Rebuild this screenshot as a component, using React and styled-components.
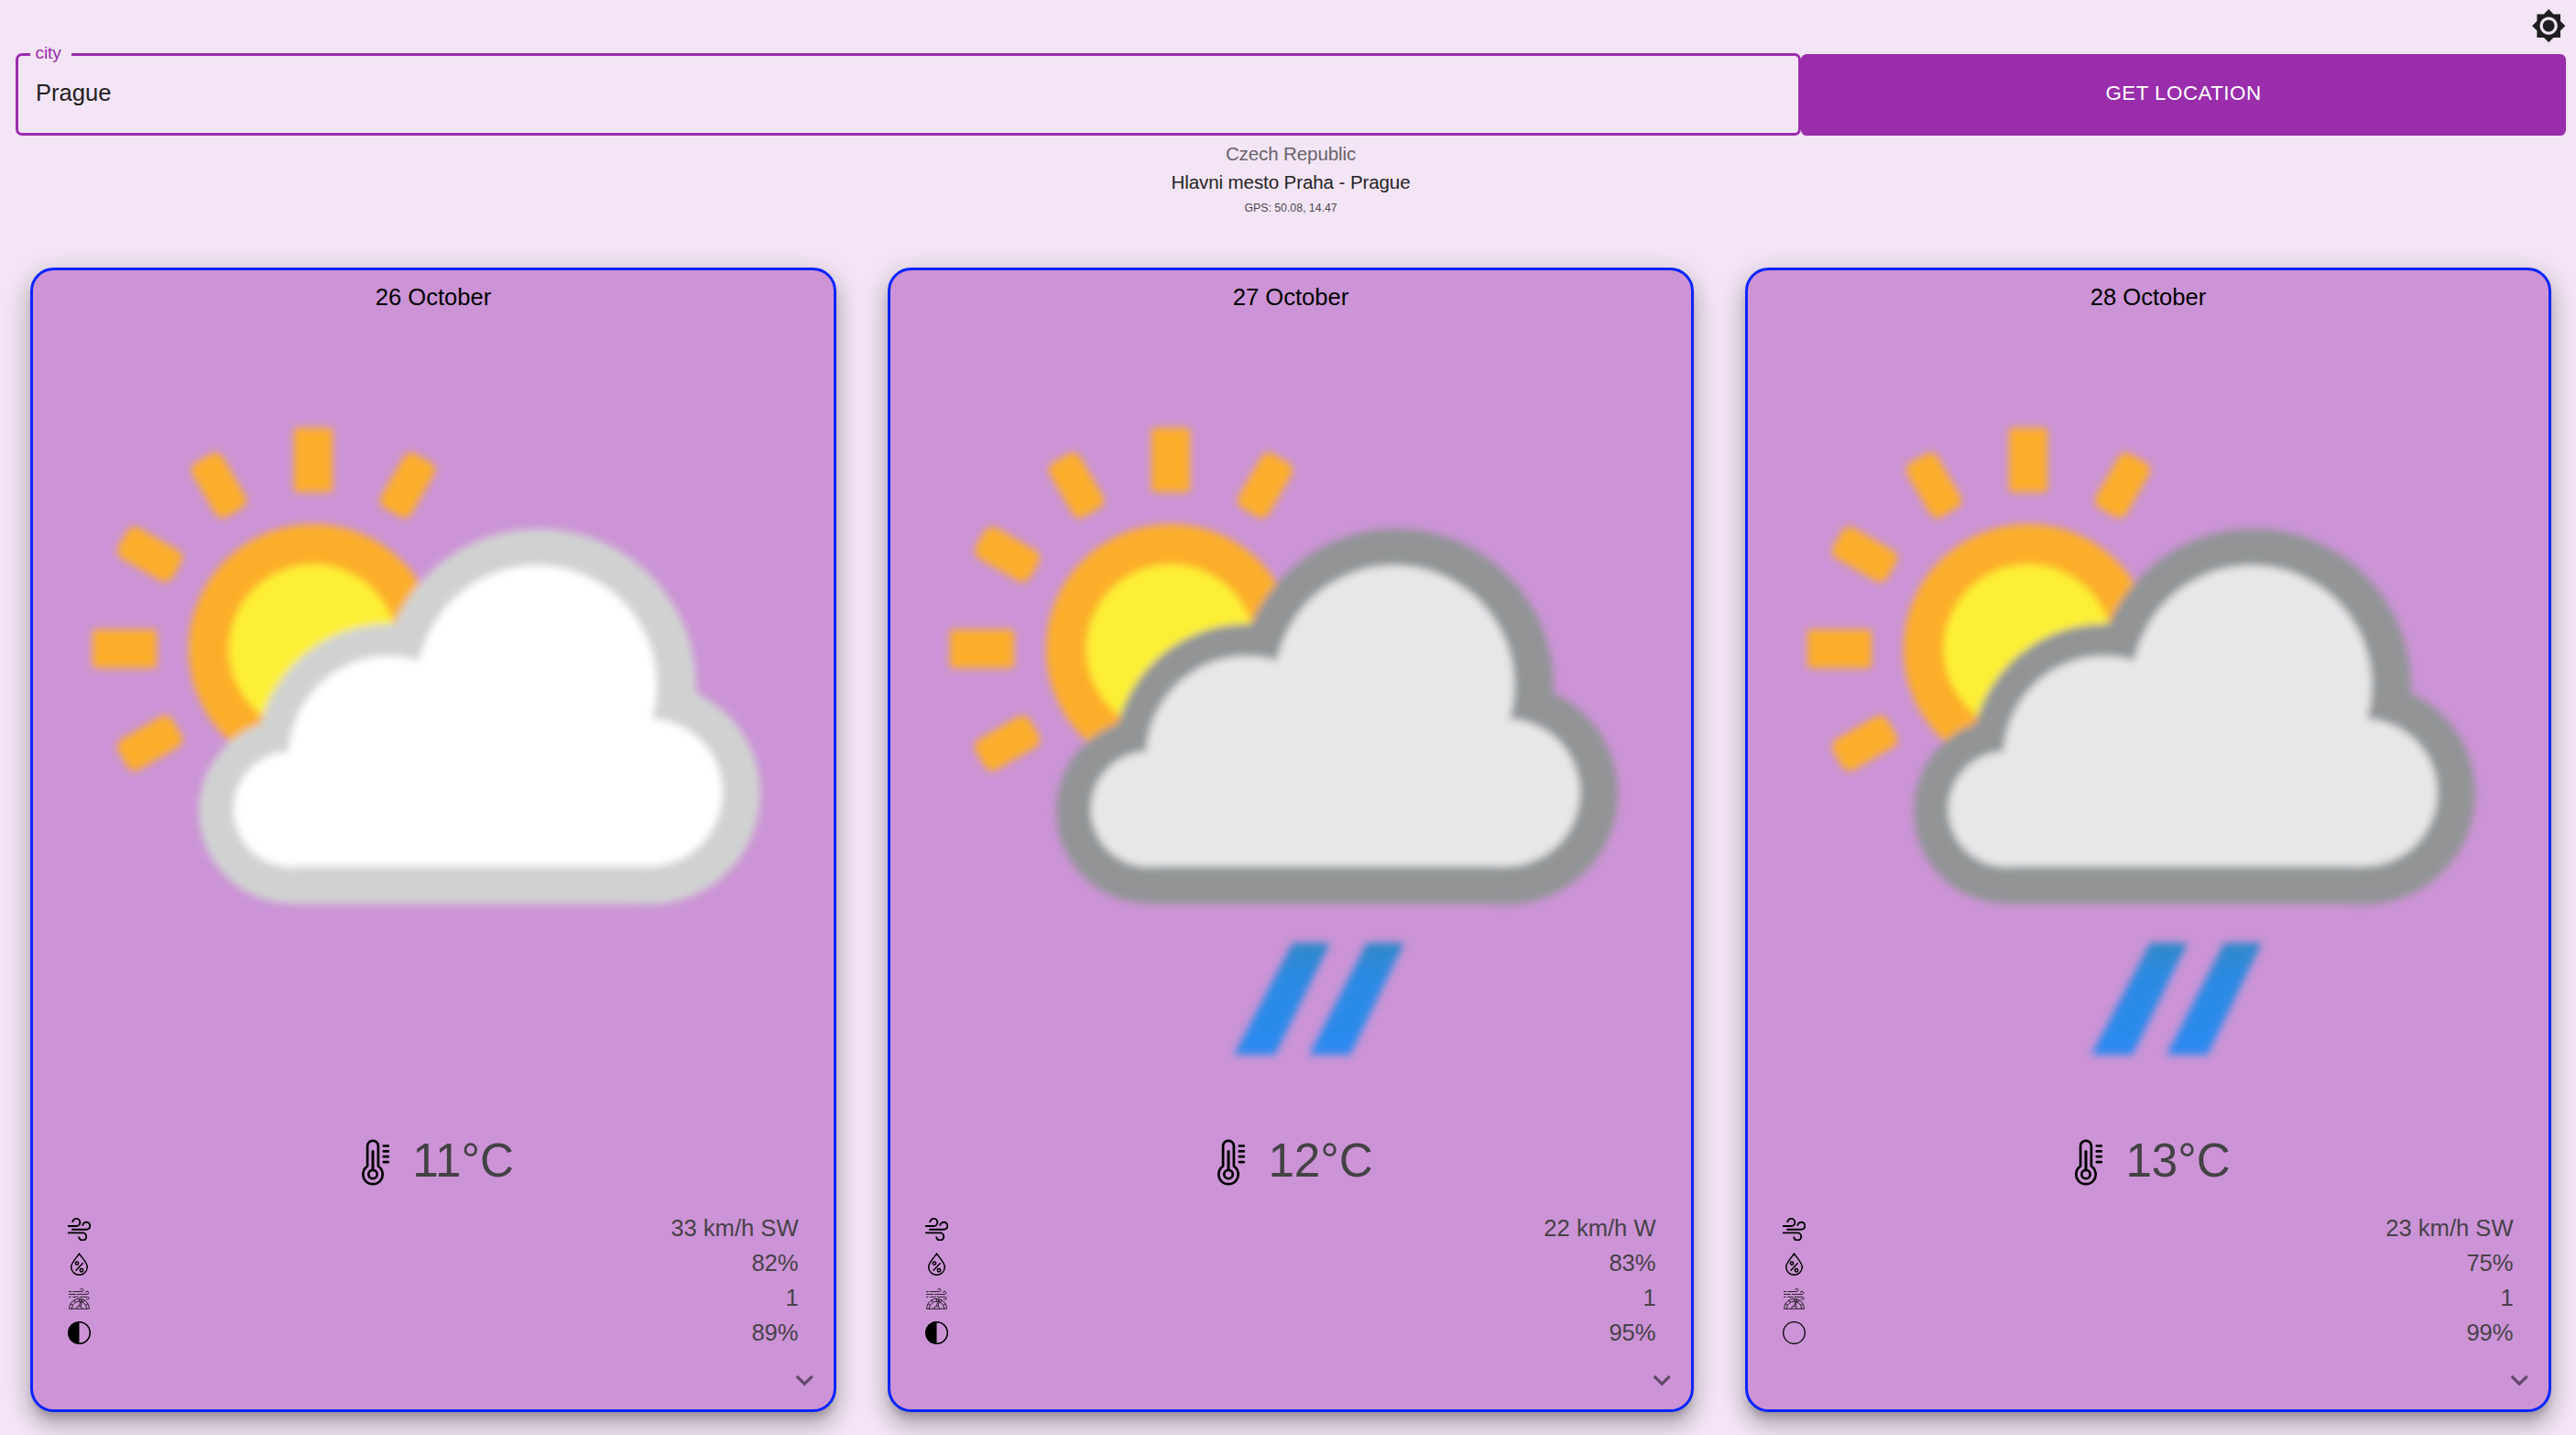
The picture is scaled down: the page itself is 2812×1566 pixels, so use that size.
import React from "react";
import styled, { createGlobalStyle } from "styled-components";

const GlobalStyle = createGlobalStyle`
  *, *::before, *::after { box-sizing: border-box; }
  html, body { margin: 0; padding: 0; }
  body {
    background: #f3e5f5;
    font-family: "Liberation Sans", Arial, Helvetica, sans-serif;
    color: rgba(0, 0, 0, 0.87);
    overflow: hidden;
  }
`;

const Page = styled.main`
  min-height: 1566px;
  padding: 0 11px 25px 17px;
`;

const TopBar = styled.header`
  display: flex;
  justify-content: flex-end;
  height: 58px;
  padding-top: 9px;
`;

const ThemeButton = styled.button`
  display: block;
  width: 38.4px;
  height: 38.4px;
  padding: 0;
  border: 0;
  background: none;
  color: #1f1e20;
  svg { display: block; width: 100%; height: 100%; }
`;

const SearchRow = styled.div`
  display: flex;
  height: 90px;
`;

const Field = styled.div`
  position: relative;
  display: flex;
  width: 1949px;
  border: 3px solid #9a2dac;
  border-radius: 7px;
`;

const FieldLabel = styled.label`
  position: absolute;
  top: -14px;
  left: 13px;
  width: 45px;
  padding-left: 5.5px;
  background: #f3e5f5;
  color: #9a2dac;
  font-size: 19.2px;
  line-height: 22px;
  letter-spacing: -0.15px;
`;

const FieldInput = styled.input`
  flex: 1;
  min-width: 0;
  padding: 0 19px 3px;
  border: 0;
  outline: 0;
  background: none;
  color: #212022;
  font: 25.6px "Liberation Sans", Arial, sans-serif;
`;

const LocationButton = styled.button`
  width: 835px;
  height: 89px;
  margin-top: 1px;
  padding: 0 0 3px;
  border: 0;
  border-radius: 6.4px;
  background: #9a2dac;
  color: #fff;
  font: 22.4px "Liberation Sans", Arial, sans-serif;
  letter-spacing: 0.45px;
  text-transform: uppercase;
`;

const Place = styled.section`
  display: flex;
  flex-direction: column;
  align-items: center;
  height: 144px;
  padding-top: 5px;
`;

const Country = styled.div`
  font-size: 20.5px;
  line-height: 30px;
  letter-spacing: -0.1px;
  color: #69626a;
`;

const City = styled.div`
  margin-top: 1px;
  font-size: 20.5px;
  line-height: 30px;
  letter-spacing: -0.08px;
  color: #242225;
`;

const Gps = styled.div`
  margin-top: 2.500px;
  font-size: 12.3px;
  line-height: 20px;
  color: #4d484e;
`;

const Cards = styled.section`
  display: grid;
  grid-template-columns: repeat(3, 880px);
  gap: 56px;
  padding-left: 16px;
`;

const Card = styled.article`
  display: flex;
  flex-direction: column;
  height: 1249px;
  padding-top: 10px;
  border: 3px solid #0a24ff;
  border-radius: 25.6px;
  background: #cc94d6;
  box-shadow:
    0 9.6px 9.6px -4.8px rgba(0, 0, 0, 0.2),
    0 16px 22.4px 1.6px rgba(0, 0, 0, 0.14),
    0 6.4px 28.8px 4.8px rgba(0, 0, 0, 0.12);
`;

const CardDate = styled.h2`
  margin: 0 0 2.6px;
  font-size: 25.6px;
  font-weight: 400;
  line-height: 38.4px;
  text-align: center;
  color: #000;
`;

const Picture = styled.svg`
  display: block;
  width: 874px;
  height: 874px;
`;

const Temperature = styled.div`
  display: flex;
  justify-content: center;
  align-items: center;
  gap: 14px;
  height: 64px;
  margin-top: 14.8px;
  font-size: 51.2px;
  line-height: 64px;
  color: #434244;
  svg { display: block; width: 51.2px; height: 51.2px; margin-top: 4px; }
`;

const Stats = styled.ul`
  display: grid;
  grid-auto-rows: 37.8px;
  margin: 23.4px 0 0;
  padding: 0 38.4px;
  list-style: none;
`;

const Stat = styled.li`
  display: flex;
  justify-content: space-between;
  align-items: center;
  font-size: 25.6px;
  line-height: 37.8px;
  color: #484149;
  svg { display: block; width: 25px; height: 25px; margin-top: 1px; }
`;

const Expand = styled.button`
  align-self: flex-end;
  width: 38.4px;
  height: 38.4px;
  margin: 13.500px 12.6px 0 0;
  padding: 0;
  border: 0;
  background: none;
  color: #63486a;
  svg { display: block; width: 100%; height: 100%; }
`;

const BrightnessIcon = () => (
  <svg viewBox="0 0 24 24" fill="currentColor">
    <path d="M20 8.69V4h-4.69L12 .69 8.69 4H4v4.69L.69 12 4 15.31V20h4.69L12 23.31 15.31 20H20v-4.69L23.31 12 20 8.69zM12 18c-3.31 0-6-2.69-6-6s2.69-6 6-6 6 2.69 6 6-2.69 6-6 6zm0-10c-2.21 0-4 1.79-4 4s1.79 4 4 4 4-1.79 4-4-1.79-4-4-4z" />
  </svg>
);

const ChevronIcon = () => (
  <svg viewBox="0 0 24 24" fill="currentColor">
    <path d="M16.59 8.59 12 13.17 7.41 8.59 6 10l6 6 6-6z" />
  </svg>
);

const ThermometerIcon = () => (
  <svg viewBox="0 0 51.2 51.2" fill="none" stroke="#000" strokeWidth="2.7" strokeLinecap="round">
    <path d="M16.1 29.6V7.7a5.9 5.9 0 0 1 11.8 0v21.9a10.7 10.7 0 1 1-11.8 0z" strokeLinejoin="round" />
    <circle cx="22" cy="38.5" r="4.7" />
    <path d="M22 13.5v20" strokeWidth="3" />
    <path d="M33.800 7.5h5M33.800 13.4h5M33.800 19.2h5M33.800 25.1h5" />
  </svg>
);

const WindIcon = () => (
  <svg viewBox="0 0 25 25" fill="none" stroke="#000" strokeWidth="1.9">
    <path d="M0 9h9.3a4.05 4.05 0 1 0-4.05-4.05" />
    <path d="M4.2 12.8h16.1a4 4 0 1 0-4-4" />
    <path d="M0 16.4h16.2a4 4 0 1 1-4 4" />
  </svg>
);

const HumidityIcon = () => (
  <svg viewBox="0 0 25 25" fill="none" stroke="#000" strokeWidth="1.5">
    <path d="M12.5 1.2C10 4.8 3.7 11.2 3.7 15.5a8.8 8.8 0 0 0 17.6 0C21.3 11.2 15 4.8 12.5 1.2z" />
    <circle cx="10" cy="11.6" r="1.7" />
    <circle cx="15" cy="19.2" r="1.7" />
    <path d="M8.6 19.7l8-8.5" />
  </svg>
);

const GaugeIcon = () => (
  <svg viewBox="0 0 25 25" fill="none" stroke="#2c202e" strokeWidth="1">
    <path d="M1 4.5h3M5.3 4.5h10a1.6 1.6 0 1 0-1.6-1.7" />
    <path d="M1 7.4h7.8M10 7.4h11a1.6 1.6 0 1 0-1.6-1.7" />
    <path d="M1 10.3h2.5M5.3 10.3h6.4M12.8 10.3h8.8a1.5 1.5 0 1 1-1.5 1.6" />
    <path d="M1.5 23.3a11 11 0 0 1 22 0z" />
    <path d="M4.4 23.3a8.1 8.1 0 0 1 16.2 0" />
    <path d="M9.5 23.3a3 3 0 0 1 6 0M12.3 20.3l2.5-7.5M14 20.7l1.8-7.5" />
    <path d="M2.8 17.8l2.6 1.5M7 13.8l1.5 2.5M12.5 12.3v3M18 13.8l-1.5 2.5M22.2 17.8l-2.6 1.5" />
  </svg>
);

const MoonIcon = ({ full }) => (
  <svg viewBox="0 0 25 25" fill="none" stroke="#000">
    <circle cx="12.5" cy="12.5" r="11.8" strokeWidth={full ? 1.3 : 1.6} />
    {!full && <path d="M12.5 0.7a11.8 11.8 0 0 0 0 23.6z" fill="#000" stroke="none" />}
  </svg>
);

const STRAIGHT_RAYS = [-90, 0];
const SLANTED_RAYS = [-120, -60, -30, 30];

const WeatherPicture = ({ id, rain }) => {
  const edge = rain ? "#929496" : "#d0d2d1";
  const body = rain ? "#e6e7e9" : "#ffffff";
  return (
    <Picture viewBox="0 0 874 874">
      <defs>
        <filter id={id} x="0" y="0" width="874" height="874" filterUnits="userSpaceOnUse">
          <feGaussianBlur stdDeviation="4" />
        </filter>
        <linearGradient id={`${id}-rain`} x1="0" y1="0" x2="0" y2="1">
          <stop offset="0" stopColor="#2f88c8" />
          <stop offset="0.3" stopColor="#2c8ae2" />
          <stop offset="1" stopColor="#2a8af0" />
        </linearGradient>
      </defs>
      <g filter={`url(#${id})`}>
        <g fill="#fcae2a">
          {STRAIGHT_RAYS.map((a) => (
            <rect key={a} x="285" y="121" width="42" height="70" rx="3" transform={`rotate(${a} 306 362)`} />
          ))}
          {SLANTED_RAYS.map((a) => (
            <rect key={a} x="287" y="122" width="38" height="68" rx="9" transform={`rotate(${a} 306 362)`} />
          ))}
        </g>
        <circle cx="306" cy="362" r="114" fill="#fdef34" stroke="#fcae2a" strokeWidth="44" />
        <g fill={edge}>
          <circle cx="552" cy="403" r="172" />
          <circle cx="389" cy="480" r="145" />
          <circle cx="282" cy="539" r="101" />
          <circle cx="673" cy="520" r="121" />
          <rect x="282" y="480" width="391" height="160.5" />
        </g>
        <g fill={body}>
          <circle cx="550" cy="402" r="131" />
          <circle cx="389" cy="480" r="110" />
          <circle cx="282" cy="537" r="63" />
          <circle cx="672" cy="519" r="80.5" />
          <rect x="282" y="480" width="390" height="119.5" />
          <rect x="400" y="441" width="272" height="50" />
        </g>
        {rain && (
          <g fill={`url(#${id}-rain)`}>
            <path d="M439 683h41l-60 122h-45z" />
            <path d="M520 683h41l-59 122h-45z" />
          </g>
        )}
      </g>
    </Picture>
  );
};

const DAYS = [
  { date: "26 October", temp: "11°C", wind: "33 km/h SW", humidity: "82%", uv: "1", moon: "89%" },
  { date: "27 October", temp: "12°C", wind: "22 km/h W", humidity: "83%", uv: "1", moon: "95%", rain: true },
  { date: "28 October", temp: "13°C", wind: "23 km/h SW", humidity: "75%", uv: "1", moon: "99%", rain: true, full: true },
];

const DayCard = ({ day, index }) => (
  <Card>
    <CardDate>{day.date}</CardDate>
    <WeatherPicture id={`soft-${index}`} rain={day.rain} />
    <Temperature>
      <ThermometerIcon />
      <span>{day.temp}</span>
    </Temperature>
    <Stats>
      <Stat><WindIcon /><span>{day.wind}</span></Stat>
      <Stat><HumidityIcon /><span>{day.humidity}</span></Stat>
      <Stat><GaugeIcon /><span>{day.uv}</span></Stat>
      <Stat><MoonIcon full={day.full} /><span>{day.moon}</span></Stat>
    </Stats>
    <Expand aria-label="Show more"><ChevronIcon /></Expand>
  </Card>
);

export default function App() {
  return (
    <>
      <GlobalStyle />
      <Page>
        <TopBar>
          <ThemeButton aria-label="Toggle theme"><BrightnessIcon /></ThemeButton>
        </TopBar>
        <SearchRow>
          <Field>
            <FieldLabel htmlFor="city">city</FieldLabel>
            <FieldInput id="city" defaultValue="Prague" />
          </Field>
          <LocationButton>Get location</LocationButton>
        </SearchRow>
        <Place>
          <Country>Czech Republic</Country>
          <City>Hlavni mesto Praha - Prague</City>
          <Gps>GPS: 50.08, 14.47</Gps>
        </Place>
        <Cards>
          {DAYS.map((day, i) => (
            <DayCard key={day.date} day={day} index={i} />
          ))}
        </Cards>
      </Page>
    </>
  );
}
